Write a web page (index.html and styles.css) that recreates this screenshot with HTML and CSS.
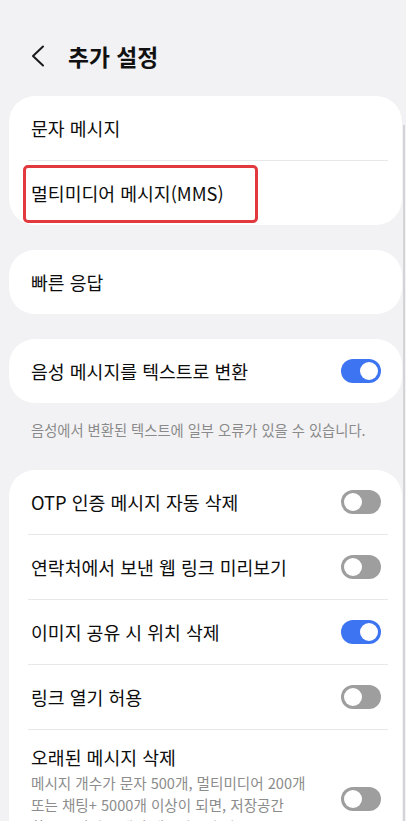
FILE: index.html
```html
<!DOCTYPE html>
<html lang="ko">
<head>
<meta charset="utf-8">
<link rel="stylesheet" href="styles.css">
</head>
<body>
<div class="page">
  <header class="header">
    <svg class="back" width="14" height="22" viewBox="0 0 14 22"><polyline points="12,1.5 2,11 12,20.5" fill="none" stroke="#1a1a1a" stroke-width="2" stroke-linecap="round" stroke-linejoin="round"/></svg>
    <h1 class="title">추가 설정</h1>
  </header>

  <section class="card">
    <div class="row"><span class="label">문자 메시지</span></div>
    <div class="divider"></div>
    <div class="row"><span class="label">멀티미디어 메시지(MMS)</span><span class="mark"></span></div>
  </section>

  <section class="card">
    <div class="row"><span class="label">빠른 응답</span></div>
  </section>

  <section class="card card-noted">
    <div class="row"><span class="label">음성 메시지를 텍스트로 변환</span><span class="toggle on"></span></div>
  </section>
  <p class="note">음성에서 변환된 텍스트에 일부 오류가 있을 수 있습니다.</p>

  <section class="card">
    <div class="row"><span class="label">OTP 인증 메시지 자동 삭제</span><span class="toggle"></span></div>
    <div class="divider"></div>
    <div class="row"><span class="label">연락처에서 보낸 웹 링크 미리보기</span><span class="toggle"></span></div>
    <div class="divider"></div>
    <div class="row"><span class="label">이미지 공유 시 위치 삭제</span><span class="toggle on"></span></div>
    <div class="divider"></div>
    <div class="row"><span class="label">링크 열기 허용</span><span class="toggle"></span></div>
    <div class="divider"></div>
    <div class="row row-tall">
      <div class="text">
        <span class="label">오래된 메시지 삭제</span>
        <span class="sub">메시지 개수가 문자 500개, 멀티미디어 200개 또는 채팅+ 5000개 이상이 되면, 저장공간 확보를 위해 오래된 메시지부터 자동으로 삭제합니다.</span>
      </div>
      <span class="toggle"></span>
    </div>
  </section>
  <div class="scrollbar"></div>
</div>
</body>
</html>
```

FILE: styles.css
```css
html, body {
  margin: 0;
  padding: 0;
  background: #f2f2f4;
}
body {
  font-family: "Noto Sans CJK KR", "Noto Sans", sans-serif;
  color: #111;
  width: 406px;
  height: 821px;
  overflow: hidden;
}
.page {
  position: relative;
  padding: 0 4px 0 9px;
}
.header {
  height: 96px;
  display: flex;
  align-items: center;
  padding-left: 22px;
  box-sizing: border-box;
  padding-top: 16px;
}
.back {
  display: block;
  margin-right: 23px;
}
.title {
  margin: 0;
  font-size: 22.8px;
  font-weight: 700;
  color: #111;
}
.card {
  background: #fff;
  border-radius: 26px;
  margin-bottom: 25px;
}
.card-noted {
  margin-bottom: 0;
}
.row {
  height: 64px;
  display: flex;
  align-items: center;
  justify-content: space-between;
  padding: 0 21px 0 22px;
  position: relative;
}
.label {
  font-size: 18.3px;
  color: #0d0d0d;
}
.divider {
  height: 1px;
  background: #e8e8ea;
  margin: 0 14px 0 19px;
}
.mark {
  position: absolute;
  left: 14px;
  top: 4px;
  width: 229px;
  height: 52px;
  border: 3px solid #e2393f;
  border-radius: 5px;
}
.note {
  margin: 0;
  padding: 17px 0 0 22px;
  height: 67px;
  box-sizing: border-box;
  font-size: 14.3px;
  line-height: 20px;
  color: #8a8a8a;
}
.toggle {
  flex: none;
  position: relative;
  width: 40px;
  height: 24px;
  border-radius: 12px;
  background: #9e9e9e;
}
.toggle::after {
  content: "";
  position: absolute;
  top: 3px;
  left: 3px;
  width: 18px;
  height: 18px;
  border-radius: 50%;
  background: #fff;
}
.toggle.on {
  background: #3d74f1;
}
.toggle.on::after {
  left: auto;
  right: 3px;
}
.row-tall {
  height: auto;
  align-items: flex-start;
  padding-top: 14px;
}
.row-tall .label {
  line-height: 26px;
}
.row-tall .toggle {
  margin-top: 43px;
}
.text {
  display: flex;
  flex-direction: column;
  width: 280px;
}
.sub {
  font-size: 14.6px;
  color: #8c8c8c;
  line-height: 22px;
  margin-top: 2px;
  word-break: keep-all;
}
.scrollbar {
  position: absolute;
  left: 403px;
  top: 125px;
  width: 2px;
  height: 696px;
  background: #d4d4d6;
}
```
